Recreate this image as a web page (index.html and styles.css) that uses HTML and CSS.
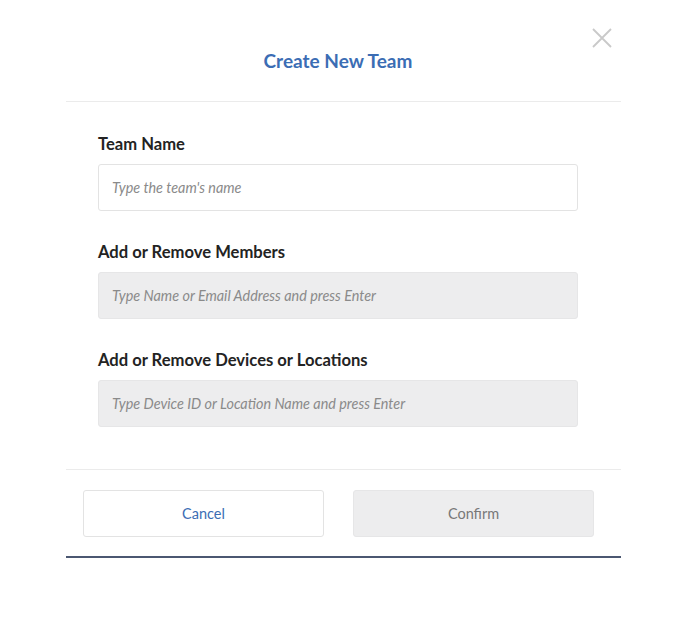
FILE: index.html
```html
<!DOCTYPE html>
<html>
<head>
<meta charset="utf-8">
<link rel="stylesheet" href="styles.css">
</head>
<body>
<div class="modal">
  <div class="header">
    <h1 class="title">Create New Team</h1>
    <button class="close" aria-label="Close">
      <svg width="20" height="20" viewBox="0 0 20 20"><path d="M1 1 L19 19 M19 1 L1 19" stroke="#c9c9c9" stroke-width="1.8" fill="none"/></svg>
    </button>
  </div>
  <div class="body">
    <div class="field">
      <label class="label">Team Name</label>
      <div class="input white">Type the team's name</div>
    </div>
    <div class="field">
      <label class="label">Add or Remove Members</label>
      <div class="input grey">Type Name or Email Address and press Enter</div>
    </div>
    <div class="field">
      <label class="label">Add or Remove Devices or Locations</label>
      <div class="input grey">Type Device ID or Location Name and press Enter</div>
    </div>
  </div>
  <div class="footer">
    <button class="btn cancel">Cancel</button>
    <button class="btn confirm">Confirm</button>
  </div>
</div>
</body>
</html>
```
FILE: styles.css
```css
* { box-sizing: border-box; }
body {
  margin: 0;
  background: #ffffff;
  font-family: Lato, "Open Sans", sans-serif;
}
.modal {
  position: relative;
  margin-left: 66px;
  width: 555px;
}
.header {
  height: 102px;
  padding-top: 49px;
  border-bottom: 1px solid #ebebeb;
  display: flex;
  justify-content: center;
}
.title {
  margin: 0 11px 0 0;
  font-size: 19px;
  line-height: 24px;
  font-weight: 700;
  color: #3b6db4;
}
.close {
  position: absolute;
  top: 28px;
  right: 9px;
  width: 20px;
  height: 20px;
  padding: 0;
  border: 0;
  background: none;
}
.close svg { display: block; }
.body {
  padding: 32px 0 42px 32px;
  display: flex;
  flex-direction: column;
  gap: 31px;
}
.field {
  display: flex;
  flex-direction: column;
  gap: 10px;
}
.label {
  font-size: 16.6px;
  line-height: 20px;
  font-weight: 700;
  color: #232323;
}
.input {
  width: 480px;
  height: 47px;
  padding-left: 13px;
  display: flex;
  align-items: center;
  font-size: 14.4px;
  font-style: italic;
  color: #8a8a8a;
  border-radius: 3px;
  border: 1px solid #e3e3e3;
}
.input.white { background: #ffffff; }
.input.grey { background: #ededee; border-color: #e6e6e7; }
.footer {
  border-top: 1px solid #ebebeb;
  border-bottom: 2px solid #4b5771;
  padding: 20px 0 19px 17px;
  display: flex;
  gap: 29px;
}
.btn {
  width: 241px;
  height: 47px;
  border-radius: 3px;
  font-family: Lato, "Open Sans", sans-serif;
  font-size: 14.5px;
}
.cancel {
  background: #ffffff;
  border: 1px solid #e3e3e3;
  color: #3b6db4;
}
.confirm {
  background: #ededee;
  border: 1px solid #e6e6e7;
  color: #787878;
}
```
